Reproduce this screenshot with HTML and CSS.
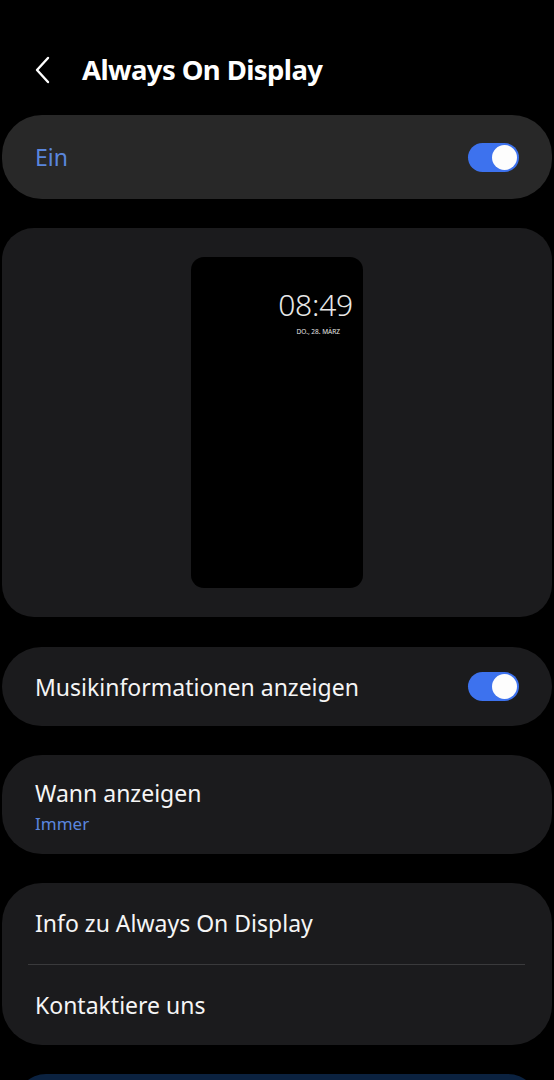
FILE: index.html
```html
<!DOCTYPE html>
<html lang="de">
<head>
<meta charset="utf-8">
<link rel="stylesheet" href="styles.css">
</head>
<body>
<header class="topbar">
  <svg class="back" width="20" height="30" viewBox="0 0 20 30"><path d="M15 3 L4 15 L15 27" fill="none" stroke="#fff" stroke-width="2.4" stroke-linecap="round" stroke-linejoin="round"/></svg>
  <h1 class="title">Always On Display</h1>
</header>
<main class="list">
  <section class="card card-main row">
    <span class="label blue">Ein</span>
    <span class="toggle"><span class="thumb"></span></span>
  </section>
  <section class="card preview">
    <div class="phone">
      <div class="clock">08:49</div>
      <div class="date">DO., 28. MÄRZ</div>
    </div>
  </section>
  <section class="card row music">
    <span class="label">Musikinformationen anzeigen</span>
    <span class="toggle"><span class="thumb"></span></span>
  </section>
  <section class="card when">
    <div class="label">Wann anzeigen</div>
    <div class="sub">Immer</div>
  </section>
  <section class="card group">
    <div class="item label">Info zu Always On Display</div>
    <div class="divider"></div>
    <div class="item label">Kontaktiere uns</div>
  </section>
  <section class="card bottom"></section>
</main>
</body>
</html>
```
FILE: styles.css
```css
* { box-sizing: border-box; }
html, body { margin: 0; background: #000; }
body {
  width: 554px;
  height: 1080px;
  overflow: hidden;
  font-family: "Noto Sans", "Open Sans", sans-serif;
  color: #f7f7f7;
}
.topbar {
  height: 115px;
  display: flex;
  align-items: center;
  padding: 24px 0 0 33px;
}
.back { display: block; }
.title {
  margin: 0 0 0 29px;
  font-size: 27.5px;
  font-weight: 700;
  letter-spacing: -0.6px;
  color: #fff;
}
.list {
  display: flex;
  flex-direction: column;
  gap: 29px;
  padding: 0 2px;
}
.card {
  background: #1b1b1d;
  border-radius: 40px;
}
.card-main {
  background: #282828;
  height: 84px;
}
.row {
  display: flex;
  align-items: center;
  justify-content: space-between;
  padding: 0 33px 0 33px;
}
.label {
  font-size: 23px;
  color: #f5f5f5;
}
.blue { color: #5a86dd; }
.toggle {
  width: 51px;
  height: 29px;
  border-radius: 15px;
  background: #3d72ee;
  display: flex;
  align-items: center;
  justify-content: flex-end;
  padding-right: 2px;
}
.thumb {
  width: 25px;
  height: 25px;
  border-radius: 50%;
  background: #fdfdfd;
}
.preview {
  height: 389px;
  border-radius: 32px;
  display: flex;
  justify-content: center;
  padding-top: 29px;
}
.phone {
  width: 172px;
  height: 331px;
  background: #000;
  border-radius: 13px;
  display: flex;
  flex-direction: column;
  align-items: flex-end;
  padding: 30px 10px 0 0;
}
.clock {
  font-size: 30px;
  font-weight: 300;
  line-height: 36px;
  color: #e8e8e8;
  letter-spacing: -0.2px;
}
.date {
  font-size: 6.5px;
  color: #e6e6e6;
  margin-top: 4px;
  margin-right: 13px;
  -webkit-font-smoothing: antialiased;
}
.music { height: 79px; margin-top: 1px; }
.when {
  height: 99px;
  padding: 22px 33px 0;
}
.sub {
  font-size: 17px;
  color: #5a86dd;
  margin-top: 3px;
}
.group {
  height: 162px;
  padding: 0;
  display: flex;
  flex-direction: column;
}
.item {
  height: 81px;
  display: flex;
  align-items: center;
  padding: 0 33px;
}
.divider {
  height: 1px;
  background: #3a3a3c;
  margin: 0 27px 0 26px;
}
.bottom {
  height: 60px;
  background: #0b2240;
  margin: 0 14px;
}
```
